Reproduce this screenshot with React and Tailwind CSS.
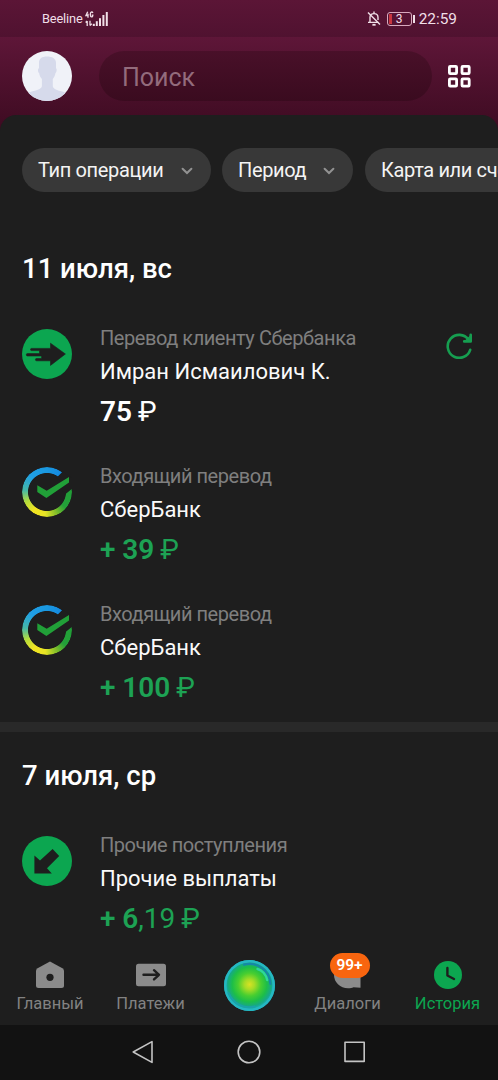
import clsx from "clsx";

const groups = [
  {
    date: "11 июля, вс",
    items: [
      { id: 1, icon: "send", type: "Перевод клиенту Сбербанка", name: "Имран Исмаилович К.", main: "75", rest: "", repeat: true },
      { id: 2, icon: "sber", type: "Входящий перевод", name: "СберБанк", main: "+ 39", rest: "", income: true },
      { id: 3, icon: "sber", type: "Входящий перевод", name: "СберБанк", main: "+ 100", rest: "", income: true },
    ],
  },
  {
    date: "7 июля, ср",
    items: [
      { id: 4, icon: "in", type: "Прочие поступления", name: "Прочие выплаты", main: "+ 6", rest: ",19", income: true },
    ],
  },
];

const SendIcon = () => (
  <svg width="50" height="50" viewBox="0 0 50 50">
    <circle cx="25" cy="25" r="25" fill="#0ca650" />
    <path
      d="M28.5 14.2 43.4 25 28.5 36.4V31.8H14.6a1 1 0 0 1 0-2.3h5V27H5.5a1.2 1.2 0 0 1 0-2.4h12V21.6H9.6a1.1 1.1 0 0 1 0-2.2H28.5Z"
      fill="#1e1e1e"
      stroke="#1e1e1e"
      strokeWidth=".6"
      strokeLinejoin="round"
    />
  </svg>
);

const InIcon = () => (
  <svg width="50" height="50" viewBox="0 0 50 50">
    <circle cx="25" cy="25" r="25" fill="#0ca650" />
    <path d="M12.4 19.6 18 24.4 30.6 12.9 37.2 19.9 25 32.2 29.8 37.4H12.4Z" fill="#1e1e1e" />
  </svg>
);

const SberIcon = () => (
  <div className="relative size-[50px]">
    {/* colored ring, opened on the right side */}
    <div className="size-[50px] rounded-full bg-[conic-gradient(from_0deg,#1a98e0_0deg,#1489e0_38deg,#21a038_75deg,#23a038_130deg,#7fbd2a_155deg,#e8e425_185deg,#f2e422_215deg,#b5dc3c_245deg,#45b9a8_275deg,#1f9fe6_315deg,#1a98e0_360deg)] [mask:radial-gradient(circle,transparent_18.6px,black_19.4px)]" />
    <svg className="absolute inset-0" width="50" height="50" viewBox="0 0 50 50">
      <path d="M34.5 10.7 40.8 4.6 53 13 50.4 21.4 43 27.6 38 20V14Z" fill="#1e1e1e" />
      <path d="M15.3 18.2 24.7 23.8 47 10V15.6L24.4 31 15.3 25Z" fill="#21a038" />
    </svg>
  </div>
);

const RepeatIcon = () => (
  <svg width="27" height="27" viewBox="0 0 27 27" fill="none" stroke="#169e50" strokeWidth="2.6" strokeLinecap="round" strokeLinejoin="round">
    <path d="M24.2 17.8A11.5 11.5 0 1 1 22.6 7.7" />
    <path d="M24.7 2.8V9.4H18.2" />
    <path d="M24 3.5 23.8 8.8H18.7Z" fill="#169e50" stroke="none" />
  </svg>
);

const Chevron = () => (
  <svg className="mt-px" width="12" height="8" viewBox="0 0 12 8" fill="none" stroke="#929292" strokeWidth="2" strokeLinecap="round">
    <path d="M1.6 1.7 6 6 10.4 1.7" />
  </svg>
);

const Orb = () => (
  <svg width="51" height="51" viewBox="0 0 51 51" fill="none">
    <defs>
      <radialGradient id="orb" cx="0.5" cy="0.48" r="0.5">
        <stop offset="0" stopColor="#d8e224" />
        <stop offset="0.2" stopColor="#a6dc26" />
        <stop offset="0.45" stopColor="#48ce30" />
        <stop offset="0.68" stopColor="#1dbe48" />
        <stop offset="0.86" stopColor="#16a985" />
        <stop offset="1" stopColor="#1fb6c2" />
      </radialGradient>
    </defs>
    <circle cx="25.5" cy="25.5" r="25.5" fill="url(#orb)" />
    <circle cx="25.5" cy="25.5" r="24.2" stroke="#25b7c2" strokeWidth="2.4" />
    <path d="M20 4.600C33 1.500 45.500 10 46.500 24" stroke="#1687a6" strokeWidth="2.200" strokeLinecap="round" />
    <path d="M4.500 33C9 44 20 49.500 31 46.500" stroke="#1aa3a8" strokeWidth="2" strokeLinecap="round" />
    <path d="M33.500 9C38 10 42 14.500 43.200 20" stroke="#2fd69a" strokeWidth="2.400" strokeLinecap="round" />
  </svg>
);

const icons = { send: SendIcon, sber: SberIcon, in: InIcon };

const StatusBar = () => (
  <div className="flex h-[37px] items-center bg-linear-to-b from-[#5b1536] to-[#501230] pl-[42px] pr-[41px] text-[#f0dfe7]">
    <span className="mt-px text-[12.8px] leading-4 tracking-[-0.15px]">Beeline</span>
    <svg className="ml-[2px]" width="24" height="16" viewBox="0 0 24 16" fill="#f0dfe7">
      <g fill="none" stroke="#f0dfe7" strokeWidth="1.3">
        <path d="M2.7.8.9 4.6h2.8M3 2.8v4M8 1.8C7 .5 5.3.8 5.3 3.6S7.8 6.8 7.8 4.2H6.7" />
        <path d="M2.2 10v5M.6 11.5 2.2 10M5 9.8v4.6M5 14.6l1.8-1.8" />
      </g>
      <rect x="7.8" y="12.8" width="2" height="2.2" />
      <rect x="10.8" y="10.2" width="2" height="4.8" />
      <rect x="14" y="7.2" width="2" height="7.8" />
      <rect x="17.4" y="4" width="2" height="11" />
      <rect x="20.8" y="1" width="2" height="14" />
    </svg>
    <svg className="ml-auto" width="14" height="15" viewBox="0 0 14 15" fill="none" stroke="#f0dfe7" strokeWidth="1.4">
      <path d="M3 11V6.2C3 4 4.6 2.6 7 2.6s4 1.6 4 3.8V9M1 11.4h10.4M7 .6v2" />
      <path d="M1 1.5 13 13.4" />
      <path d="M5.4 13.8h3.2" strokeWidth="1.8" />
    </svg>
    <div className="ml-[6px] flex items-center">
      <div className="relative flex h-[14px] w-[25px] items-center justify-center rounded-[3px] border border-[#d9a9bd] text-[12px] leading-none">
        <span className="absolute left-px top-px h-[10px] w-[3px] bg-[#c8353f]" />
        3
      </div>
      <div className="ml-px h-2 w-[2px] bg-[#f0dfe7]" />
    </div>
    <span className="ml-[4px] text-[15.4px] leading-5">22:59</span>
  </div>
);

const Header = () => (
  <div className="flex h-[94px] items-start bg-linear-to-b from-[#5e1638] to-[#3d0b21] pl-[22px] pr-[27px] pt-[14px]">
    <svg width="50" height="50" viewBox="0 0 50 50">
      <defs>
        <clipPath id="avatar">
          <circle cx="25" cy="25" r="25" />
        </clipPath>
      </defs>
      <g clipPath="url(#avatar)">
        <rect width="50" height="50" fill="#f0f2f8" />
        <path
          d="M17 12C17 7.6 20 5.6 25 5.6S34 7.6 34 12v5.2c1 0 .9 4-.6 5.1-.4 2.6-1.4 4.2-2.6 5.6v7c0 2.8 4 4.2 7.6 5.2 4 1 6.6 2 8.6 4V51H3v-6.9c2-2 4.6-3 8.6-4 3.6-1 8.3-2.4 8.3-5.2v-7c-1.4-1.4-2.4-3-2.7-5.6-1.5-1.1-1.6-5.1-.2-5.1Z"
          fill="#d6daeb"
        />
      </g>
    </svg>
    <div className="ml-[27px] flex h-[50px] w-[333px] items-center rounded-full bg-linear-to-b from-[#491029] to-[#3a0b1f] pl-[23px] pt-[3px] text-[25px] leading-8 text-[#936b7c]">
      Поиск
    </div>
    <svg className="ml-auto mt-[13px]" width="24" height="24" viewBox="0 0 24 24" fill="none" stroke="#fff" strokeWidth="2.8">
      <rect x="2.4" y="2.4" width="7.2" height="7.2" rx="0.8" />
      <rect x="15" y="2.4" width="7.2" height="7.2" rx="0.8" />
      <rect x="2.4" y="14.9" width="7.2" height="7.2" rx="0.8" />
      <rect x="15" y="14.9" width="7.2" height="7.2" rx="0.8" />
    </svg>
  </div>
);

const Chip = ({ label, className }) => (
  <div className={clsx("flex h-11 shrink-0 items-center justify-between rounded-full bg-[#383838] pl-4 pr-[18px] text-[20px] tracking-[-0.35px] text-[#f4f4f4]", className)}>
    <span>{label}</span>
    <Chevron />
  </div>
);

const Operation = ({ item }) => {
  const Icon = icons[item.icon];

  return (
    <div className="flex h-[106px] pl-[22px] pr-[25px]">
      <div className="mt-[5px] size-[50px] shrink-0">
        <Icon />
      </div>
      <div className="ml-[28px]">
        <p className="h-7 text-[20px] leading-7 tracking-[-0.45px] text-[#7f7f7f]">{item.type}</p>
        <p className="h-[39px] text-[22px] leading-[39px] text-[#fafafa]">{item.name}</p>
        <p className={clsx("h-[39px] text-[28px] leading-[41px]", item.income ? "text-[#1da254]" : "text-white")}>
          <span className="font-semibold">{item.main}</span>
          {item.rest}
          <span className="ml-[6px]">₽</span>
        </p>
      </div>
      {item.repeat && (
        <div className="ml-auto mt-2">
          <RepeatIcon />
        </div>
      )}
    </div>
  );
};

const NavItem = ({ label, active, children }) => (
  <div className={clsx("flex flex-col items-center", active ? "text-[#0ca650]" : "text-[#828282]")}>
    <div className="relative mt-[19px] h-[35px]">{children}</div>
    <span className="text-[16.5px] leading-5">{label}</span>
  </div>
);

const BottomNav = () => (
  <div className="grid h-[85px] grid-cols-[100px_101px_97px_99px_101px] bg-[#1e1e1e]">
    <NavItem label="Главный">
      <svg width="32" height="32" viewBox="0 0 32 32">
        <path d="M16 2.6 28.4 9.2Q30 10.2 30 12V26.5Q30 29 27.5 29H4.5Q2 29 2 26.5V12Q2 10.2 3.6 9.2Z" fill="#8b8b8b" />
        <circle cx="16" cy="18.3" r="3.6" fill="#1e1e1e" />
      </svg>
    </NavItem>
    <NavItem label="Платежи">
      <svg width="32" height="32" viewBox="0 0 32 32">
        <rect x="1" y="4.7" width="30" height="22.5" rx="2.5" fill="#8b8b8b" />
        <path d="M8.5 15.8H24M19 11.2 24 15.8 19 20.4" fill="none" stroke="#1e1e1e" strokeWidth="2.4" strokeLinecap="round" strokeLinejoin="round" />
      </svg>
    </NavItem>
    <div className="flex justify-center pt-5">
      <Orb />
    </div>
    <NavItem label="Диалоги">
      <svg width="32" height="32" viewBox="0 0 32 32">
        <path d="M16 2A14 13.6 0 0 0 2 15.5 14 13.5 0 0 0 16 29.3C18.5 29.3 20 29 21.5 28.3L28.5 28.8V16C30 6 23 2 16 2Z" fill="#8b8b8b" />
      </svg>
      <div className="absolute -left-[2px] -top-[6px] flex h-[25px] w-10 items-center justify-center rounded-full bg-[#f8650f] pt-px text-[15.5px] font-semibold text-white">
        99+
      </div>
    </NavItem>
    <NavItem label="История" active>
      <svg width="32" height="32" viewBox="0 0 32 32">
        <circle cx="16" cy="16" r="14" fill="#0ca650" />
        <path d="M15.4 9V16.5L22 20" fill="none" stroke="#1e1e1e" strokeWidth="2.4" strokeLinecap="round" strokeLinejoin="round" />
      </svg>
    </NavItem>
  </div>
);

const SystemBar = () => (
  <div className="flex h-[55px] items-center justify-center gap-[82px] bg-[#121212] pb-px text-[#c4c4c4]">
    <svg width="24" height="24" viewBox="0 0 24 24" fill="none" stroke="currentColor" strokeWidth="1.6" strokeLinejoin="round">
      <path d="M21 1.6V22.4L2.2 12Z" />
    </svg>
    <svg width="24" height="24" viewBox="0 0 24 24" fill="none" stroke="currentColor" strokeWidth="1.6">
      <circle cx="12" cy="12" r="10.8" />
    </svg>
    <svg width="24" height="24" viewBox="0 0 24 24" fill="none" stroke="currentColor" strokeWidth="1.6" strokeLinejoin="round">
      <rect x="2" y="2.2" width="19.2" height="19.2" />
    </svg>
  </div>
);

export default function App() {
  return (
    <div className="flex h-[1080px] w-[498px] flex-col overflow-hidden whitespace-nowrap bg-[#1e1e1e] font-['Roboto',sans-serif]">
      <StatusBar />
      <Header />
      {/* sheet with operations, overlaps the header */}
      <div className="relative -mt-4 flex-1 overflow-hidden rounded-t-[16px] bg-[#1e1e1e]">
        <div className="flex overflow-hidden pl-[22px] pt-[33px]">
          <Chip label="Тип операции" className="mr-[11px] w-[189px]" />
          <Chip label="Период" className="mr-3 w-[131px]" />
          <Chip label="Карта или счёт" className="w-[200px]" />
        </div>
        {groups.map((group, index) => (
          <div key={group.date} className={index === 0 ? "pt-14" : "mt-4 border-t-[10px] border-[#292929] pt-[23px]"}>
            <h2 className="mb-9 h-10 pl-[22px] text-[27.5px] font-medium leading-[41px] text-white">{group.date}</h2>
            <div className="flex flex-col gap-8">
              {group.items.map((item) => (
                <Operation key={item.id} item={item} />
              ))}
            </div>
          </div>
        ))}
      </div>
      <BottomNav />
      <SystemBar />
    </div>
  );
}
